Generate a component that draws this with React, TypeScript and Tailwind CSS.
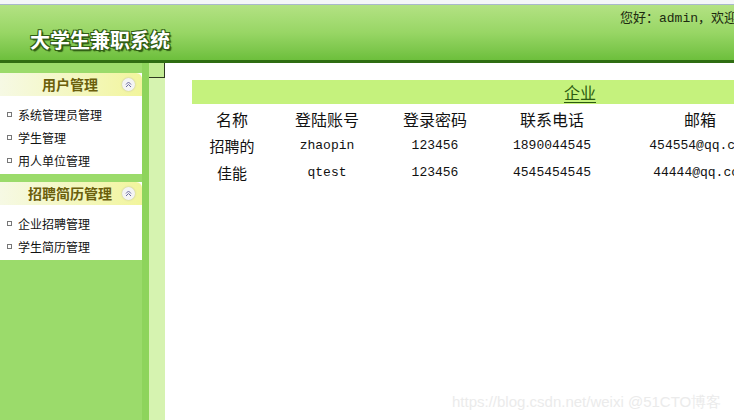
const menus = [
  { title: "用户管理", items: ["系统管理员管理", "学生管理", "用人单位管理"] },
  { title: "招聘简历管理", items: ["企业招聘管理", "学生简历管理"] },
];

const columns = [
  { label: "名称", w: "w-[80px]" },
  { label: "登陆账号", w: "w-[110px]" },
  { label: "登录密码", w: "w-[106px]" },
  { label: "联系电话", w: "w-[128px]" },
  { label: "邮箱", w: "w-[168px]" },
];

const rows = [
  ["招聘的", "zhaopin", "123456", "1890044545", "454554@qq.com"],
  ["佳能", "qtest", "123456", "4545454545", "44444@qq.com"],
];

const cjk = "font-['SimSun','Noto_Sans_CJK_SC',sans-serif]";
const mono = "font-['Liberation_Mono','Noto_Sans_CJK_SC',monospace]";

function CollapseIcon() {
  return (
    <span className="flex h-[13px] w-[13px] shrink-0 items-center justify-center rounded-full bg-[#f4f4f4] shadow-[0_0_2px_#b8b8a0]">
      <svg width="7" height="7" viewBox="0 0 7 7" fill="none" stroke="#6a6aa0" strokeWidth="1">
        <path d="M1 3.5 L3.5 1 L6 3.5 M1 6 L3.5 3.5 L6 6" />
      </svg>
    </span>
  );
}

export default function App() {
  return (
    <div className={`relative flex h-[420px] w-[734px] flex-col overflow-hidden bg-white ${cjk}`}>
      <div className="h-[5px] shrink-0 border-b border-[#a9b8cc] bg-[#f4f6f9]" />
      <header className="relative h-[58px] shrink-0 border-b-[3px] border-[#2f6d12] bg-gradient-to-b from-[#b3e283] via-[#98d665] to-[#6dbf3c]">
        <h1 className="absolute left-[30px] top-[20px] whitespace-nowrap text-[20px] font-bold text-white [text-shadow:1px_1px_0_#2f5d14,-1px_-1px_0_#2f5d14,1px_-1px_0_#2f5d14,-1px_1px_0_#2f5d14,2px_2px_1px_#2f5d14]">
          大学生兼职系统
        </h1>
        <div className="absolute left-[620px] top-[2px] whitespace-nowrap text-[13px] text-[#1c2a10]">
          您好：<span className={mono}>admin</span>，欢迎
        </div>
      </header>
      <div className="flex flex-1">
        <aside className="flex w-[142px] shrink-0 flex-col gap-[8px] bg-[#9bdb6b] pt-[10px]">
          {menus.map((m) => (
            <div key={m.title} className="flex flex-col bg-white">
              <div className="flex h-[23px] items-center rounded-tr-[6px] bg-gradient-to-r from-[#f6f9e4] to-[#f2f59c] pl-[18px] pr-[7px]">
                <span className="flex-1 whitespace-nowrap text-center text-[14px] font-bold text-[#6b5f0c]">{m.title}</span>
                <CollapseIcon />
              </div>
              <ul className="flex flex-col gap-[4px] pb-[4px] pt-[9px]">
                {m.items.map((it) => (
                  <li key={it} className="flex h-[19px] items-center gap-[6px] pl-[7px] text-[12px] text-[#111]">
                    <span className="h-[5px] w-[5px] border border-[#777]" />
                    {it}
                  </li>
                ))}
              </ul>
            </div>
          ))}
        </aside>
        <div className="w-[7px] shrink-0 bg-[#8ed45c]" />
        <div className="flex w-[16px] shrink-0 flex-col bg-[#d6f3b0]">
          <div className="h-[15px] border-b border-r border-[#2f3a20] bg-[#c3ec94]" />
        </div>
        <main className="flex-1 pl-[27px] pt-[17px]">
          <div className="flex h-[24px] items-center justify-center bg-[#c5f27d] pl-[184px]">
            <span className="text-[16px] text-[#2b5a10] underline underline-offset-[3px]">企业</span>
          </div>
          <div className="flex pt-[2px]">
            {columns.map((c) => (
              <div key={c.label} className={`${c.w} shrink-0 text-center text-[16px] leading-[26px] text-[#111]`}>
                {c.label}
              </div>
            ))}
          </div>
          {rows.map((r) => (
            <div key={r[1]} className="flex whitespace-nowrap text-[#111]">
              {r.map((v, i) => (
                <div
                  key={i}
                  className={`${columns[i].w} shrink-0 text-center leading-[27px] ${i === 0 ? "text-[15px]" : `${mono} text-[13px]`}`}
                >
                  {v}
                </div>
              ))}
            </div>
          ))}
        </main>
      </div>
      <div className="pointer-events-none absolute left-[452px] top-[391px] whitespace-nowrap font-['Liberation_Sans',sans-serif] text-[15px] text-[#ebebeb]">
        https://blog.csdn.net/weixi @51CTO博客
      </div>
    </div>
  );
}
